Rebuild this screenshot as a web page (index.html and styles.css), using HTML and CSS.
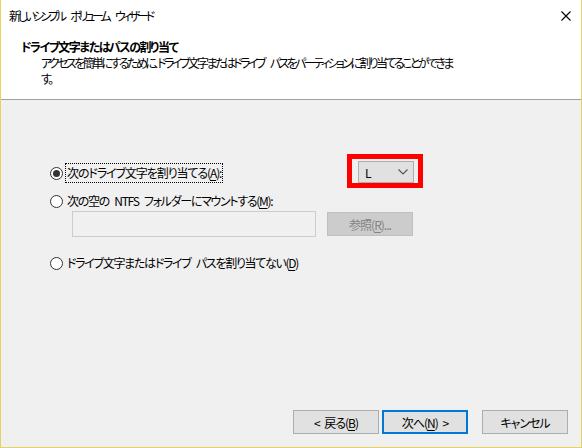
FILE: index.html
```html
<!DOCTYPE html>
<html lang="ja">
<head>
  <meta charset="UTF-8">
  <title>新しいシンプル ボリューム ウィザード</title>
  <link rel="stylesheet" href="styles.css">
</head>
<body>

  <div class="window">
    <div class="titlebar">
      <span class="title">新しいシンプル ボリューム ウィザード</span>
      <svg class="close" width="10" height="10" viewBox="0 0 10 10">
        <path d="M0.5 0.5 L9.5 9.5 M9.5 0.5 L0.5 9.5" stroke="#000" stroke-width="1.1" fill="none"/>
      </svg>
    </div>

    <div class="header">
      <div class="header-title">ドライブ文字またはパスの割り当て</div>
      <div class="header-sub">アクセスを簡単にするために、ドライブ文字またはドライブ パスをパーティションに割り当てることができま<br>す。</div>
    </div>

    <div class="content">
      <div class="option-row first">
        <span class="radio checked"></span>
        <span class="label focused">次のドライブ文字を割り当てる(<u>A</u>):</span>
        <div class="highlight">
          <div class="combo">
            <span>L</span>
            <svg width="10" height="6" viewBox="0 0 10 6">
              <path d="M0.5 0.5 L5 5 L9.5 0.5" stroke="#555" stroke-width="1.2" fill="none"/>
            </svg>
          </div>
        </div>
      </div>

      <div class="option-row second">
        <span class="radio"></span>
        <span class="label">次の空の NTFS フォルダーにマウントする(<u>M</u>):</span>
      </div>

      <div class="path-row">
        <div class="textbox"></div>
        <button class="btn disabled">参照(<u>R</u>)...</button>
      </div>

      <div class="option-row last">
        <span class="radio"></span>
        <span class="label">ドライブ文字またはドライブ パスを割り当てない(<u>D</u>)</span>
      </div>
    </div>

    <div class="footer">
      <button class="btn">&lt; 戻る(<u>B</u>)</button>
      <button class="btn default">次へ(<u>N</u>) &gt;</button>
      <button class="btn cancel">キャンセル</button>
    </div>
  </div>

</body>
</html>
```

FILE: styles.css
```css
body {
  margin: 0;
  font-family: "Noto Sans CJK JP", "Noto Sans", sans-serif;
  font-size: 12px;
  font-feature-settings: "palt";
  word-spacing: 3px;
  color: #000;
}

.window {
  width: 582px;
  height: 448px;
  box-sizing: border-box;
  border: 1px solid #e6d25c;
  border-top: none;
  background: #f0f0f0;
  display: flex;
  flex-direction: column;
}

.titlebar {
  height: 31px;
  background: #fff;
  display: flex;
  align-items: center;
  justify-content: space-between;
  padding: 0 10px 0 8px;
}

.title {
  letter-spacing: -3.2px;
  word-spacing: 7px;
}

.header {
  height: 69px;
  box-sizing: border-box;
  background: #fff;
  border-bottom: 1px solid #a0a0a0;
  padding: 8px 0 0 20px;
  line-height: 16px;
}

.header-title {
  font-weight: bold;
  letter-spacing: -1.5px;
}

.header-sub {
  padding-left: 20px;
  letter-spacing: -2.6px;
  word-spacing: 6px;
}

.content {
  flex: 1;
  padding: 63px 0 0 49px;
}

.option-row {
  display: flex;
  align-items: center;
  height: 20px;
}

.option-row.first {
  width: 373px;
}

.option-row.second {
  margin-top: 8px;
}

.option-row.last {
  margin-top: 16px;
}

.radio {
  flex: none;
  width: 11px;
  height: 11px;
  border: 1px solid #333;
  border-radius: 50%;
  background: #fff;
  position: relative;
  margin-right: 3px;
}

.radio.checked::after {
  content: "";
  position: absolute;
  left: 2px;
  top: 2px;
  width: 7px;
  height: 7px;
  border-radius: 50%;
  background: #333;
}

.label {
  padding: 0 1px;
  line-height: 18px;
  letter-spacing: -1.3px;
  word-spacing: 4px;
}

.label.focused {
  letter-spacing: -1.1px;
  outline: 1px dotted #000;
}

u {
  text-decoration-thickness: 1px;
  text-underline-offset: 2px;
}

.highlight {
  margin: -4px 0 0 auto;
  border: 5px solid #ff0000;
  padding: 2px 4px 0 6px;
}

.combo {
  width: 43px;
  height: 20px;
  border: 1px solid #adadad;
  background: #e1e1e1;
  display: flex;
  align-items: center;
  justify-content: space-between;
  padding: 0 5px 0 6px;
}

.path-row {
  display: flex;
  align-items: center;
  gap: 11px;
  margin-left: 22px;
}

.textbox {
  width: 242px;
  height: 24px;
  border: 1px solid #ccc;
  background: #f0f0f0;
}

.btn {
  width: 86px;
  height: 24px;
  font-family: inherit;
  font-size: 12px;
  font-feature-settings: "palt";
  letter-spacing: -1px;
  word-spacing: 3px;
  background: #e1e1e1;
  border: 1px solid #adadad;
  color: #000;
  padding: 0;
}

.btn.disabled {
  background: #cccccc;
  border-color: #bfbfbf;
  color: #838383;
}

.btn.default {
  border: 2px solid #0078d7;
}

.footer {
  display: flex;
  justify-content: flex-end;
  gap: 3px;
  padding: 0 13px 13px 0;
}

.btn.cancel {
  margin-left: 11px;
}
```
